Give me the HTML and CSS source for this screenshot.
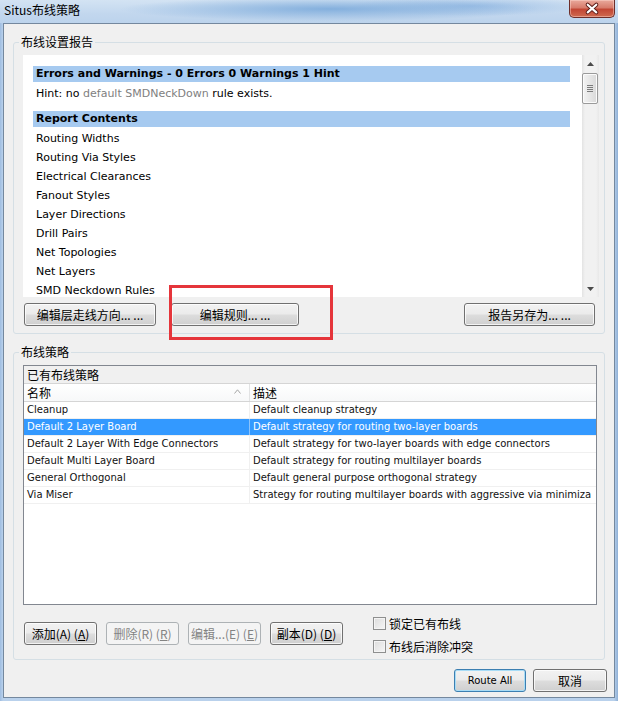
FILE: index.html
```html
<!DOCTYPE html>
<html lang="zh-CN">
<head>
<meta charset="utf-8">
<title>Situs布线策略</title>
<link rel="stylesheet" href="styles.css">
</head>
<body>
<div class="window">
  <header class="titlebar">
    <span class="title">Situs布线策略</span>
    <span class="close-btn">
      <svg width="46" height="18" viewBox="0 0 46 18">
        <path d="M18.5 4.5 L27.5 12.5 M27.5 4.5 L18.5 12.5" stroke="#5a1c18" stroke-width="4.2" stroke-linecap="round"/>
        <path d="M18.5 4.5 L27.5 12.5 M27.5 4.5 L18.5 12.5" stroke="#ffffff" stroke-width="2.2" stroke-linecap="round"/>
      </svg>
    </span>
  </header>
  <main class="client">
    <fieldset class="group group-report">
      <legend>布线设置报告</legend>
      <div class="report">
        <div class="report-body">
          <div class="rhead">Errors and Warnings - 0 Errors 0 Warnings 1 Hint</div>
          <div class="rline">Hint: no <span class="dim">default SMDNeckDown</span> rule exists.</div>
          <div class="rhead rhead-gap">Report Contents</div>
          <div class="rline">Routing Widths</div>
          <div class="rline">Routing Via Styles</div>
          <div class="rline">Electrical Clearances</div>
          <div class="rline">Fanout Styles</div>
          <div class="rline">Layer Directions</div>
          <div class="rline">Drill Pairs</div>
          <div class="rline">Net Topologies</div>
          <div class="rline">Net Layers</div>
          <div class="rline">SMD Neckdown Rules</div>
        </div>
        <div class="vscroll">
          <div class="sb-arrow"><svg width="7" height="4" viewBox="0 0 7 4"><path d="M0 4 L3.5 0 L7 4 Z" fill="#4a4a4a"/></svg></div>
          <div class="sb-track">
            <div class="sb-thumb"><span></span><span></span><span></span><span></span></div>
          </div>
          <div class="sb-arrow"><svg width="7" height="4" viewBox="0 0 7 4"><path d="M0 0 L7 0 L3.5 4 Z" fill="#4a4a4a"/></svg></div>
        </div>
      </div>
      <div class="btn-row">
        <button class="btn btn-layer">编辑层走线方向... ...</button>
        <button class="btn btn-rules">编辑规则... ...</button>
        <button class="btn btn-save">报告另存为... ...</button>
      </div>
    </fieldset>

    <fieldset class="group group-strategy">
      <legend>布线策略</legend>
      <div class="listview">
        <div class="lv-group">已有布线策略</div>
        <div class="lv-header">
          <div class="lv-col1">名称<svg class="sort" width="7" height="5" viewBox="0 0 7 5"><path d="M0.5 4.5 L3.5 0.8 L6.5 4.5" fill="none" stroke="#a6a6a6" stroke-width="1"/></svg></div>
          <div class="lv-col2">描述</div>
        </div>
        <div class="lv-row"><div class="lv-col1">Cleanup</div><div class="lv-col2">Default cleanup strategy</div></div>
        <div class="lv-row selected"><div class="lv-col1">Default 2 Layer Board</div><div class="lv-col2">Default strategy for routing two-layer boards</div></div>
        <div class="lv-row"><div class="lv-col1">Default 2 Layer With Edge Connectors</div><div class="lv-col2">Default strategy for two-layer boards with edge connectors</div></div>
        <div class="lv-row"><div class="lv-col1">Default Multi Layer Board</div><div class="lv-col2">Default strategy for routing multilayer boards</div></div>
        <div class="lv-row"><div class="lv-col1">General Orthogonal</div><div class="lv-col2">Default general purpose orthogonal strategy</div></div>
        <div class="lv-row"><div class="lv-col1">Via Miser</div><div class="lv-col2">Strategy for routing multilayer boards with aggressive via minimiza</div></div>
      </div>
      <div class="strat-actions">
        <button class="btn btn-sm">添加(A) (<u>A</u>)</button>
        <button class="btn btn-sm" disabled>删除(R) (<u>R</u>)</button>
        <button class="btn btn-sm" disabled>编辑...(E) (<u>E</u>)</button>
        <button class="btn btn-sm">副本(D) (<u>D</u>)</button>
        <div class="checks">
          <label class="check"><span class="box"></span>锁定已有布线</label>
          <label class="check"><span class="box"></span>布线后消除冲突</label>
        </div>
      </div>
    </fieldset>

    <div class="dlg-actions">
      <button class="btn btn-default">Route All</button>
      <button class="btn btn-cancel">取消</button>
    </div>
  </main>
  <div class="annotation"></div>
</div>
</body>
</html>
```

FILE: styles.css
```css
* { box-sizing: border-box; }

html, body {
  margin: 0;
  padding: 0;
}

body {
  width: 618px;
  height: 701px;
  overflow: hidden;
  background: #a9c4e3;
  font-family: "DejaVu Sans", sans-serif;
  color: #000;
}

.window {
  position: relative;
  width: 618px;
  height: 701px;
  display: flex;
  flex-direction: column;
  background: linear-gradient(90deg, #9fbde0 0, #b9d1ec 3px, #b9d1ec 614px, #8fb0d6 618px);
}

/* ---------- title bar ---------- */
.titlebar {
  flex: none;
  height: 23px;
  display: flex;
  align-items: flex-start;
  background:
    radial-gradient(ellipse 210px 12px at 330px 9px, rgba(120, 168, 218, 0.85), rgba(120, 168, 218, 0) 100%),
    radial-gradient(ellipse 120px 10px at 470px 6px, rgba(140, 180, 225, 0.7), rgba(140, 180, 225, 0) 100%),
    linear-gradient(180deg, #d3e3f3 0%, #c2d7ee 60%, #bcd3ec 100%);
}

.title {
  padding-left: 4px;
  font: 12px/20px "Noto Sans CJK SC", sans-serif;
  color: #000;
}

.close-btn {
  margin-left: auto;
  margin-right: 3px;
  width: 46px;
  height: 18px;
  display: flex;
  border: 1px solid #6d2e2a;
  border-top: none;
  border-radius: 0 0 5px 5px;
  background: linear-gradient(180deg, #e9a99c 0%, #d77c6c 45%, #c24634 55%, #cf6a50 100%);
  box-shadow: inset 0 0 0 1px rgba(255, 220, 210, 0.45);
}

/* ---------- client ---------- */
.client {
  flex: 1;
  min-height: 0;
  margin: 0 3px 3px 3px;
  border: 1px solid #74889e;
  background: #f0f0f0;
  padding: 0 9px;
  display: flex;
  flex-direction: column;
}

.group {
  margin: 0;
  min-width: 0;
  padding: 5px 5px 7px 9px;
  border: 1px solid #d5dfe5;
  border-radius: 3px;
}

.group legend {
  padding: 0 2px;
  margin-left: -4px;
  font: 12px/16px "Noto Sans CJK SC", sans-serif;
  color: #000;
}

.group-report { margin-top: 10px; }
.group-strategy { margin-top: 10px; padding-bottom: 3px; }

/* ---------- report ---------- */
.report {
  height: 242px;
  display: flex;
  background: #fff;
}

.report-body {
  flex: 1;
  min-width: 0;
  overflow: hidden;
  padding: 11px 12px 0 10px;
  font-size: 11px;
}

.rhead {
  height: 16px;
  line-height: 16px;
  padding-left: 3px;
  background: #a6caf0;
  font-weight: bold;
  white-space: nowrap;
}

.rhead-gap { margin-top: 8px; }

.rline {
  margin-top: 2px;
  line-height: 19px;
  padding-left: 3px;
  white-space: nowrap;
}

.rline + .rline { margin-top: 0; }

.dim { color: #808080; }

.vscroll {
  flex: none;
  width: 17px;
  display: flex;
  flex-direction: column;
  background: linear-gradient(90deg, #e3e3e3 0, #f1f1f1 3px, #f1f1f1 14px, #e8e8e8 17px);
}

.sb-arrow {
  height: 17px;
  display: flex;
  align-items: center;
  justify-content: center;
}

.sb-track { flex: 1; }

.sb-thumb {
  margin: 1px 1px 0 0;
  height: 31px;
  border: 1px solid #9a9a9a;
  border-radius: 2px;
  background: linear-gradient(90deg, #f3f3f3 0%, #e6e6e6 50%, #d9d9d9 100%);
  box-shadow: inset 0 0 0 1px #fbfbfb;
  display: flex;
  flex-direction: column;
  align-items: center;
  justify-content: center;
  gap: 1px;
}

.sb-thumb span {
  width: 6px;
  height: 1px;
  background: #7b7b7b;
}

/* ---------- buttons ---------- */
.btn {
  height: 23px;
  padding: 0;
  border: 1px solid #707070;
  border-radius: 3px;
  background: linear-gradient(180deg, #f2f2f2 0%, #ebebeb 48%, #dddddd 52%, #cfcfcf 100%);
  box-shadow: inset 0 0 0 1px rgba(255, 255, 255, 0.75);
  font: 12px/21px "Noto Sans CJK SC", sans-serif;
  color: #000;
  text-align: center;
  white-space: nowrap;
}

.btn:disabled {
  border-color: #adb2b5;
  background: #f4f4f4;
  box-shadow: none;
  color: #838383;
}

.btn u { text-decoration-thickness: 1px; text-underline-offset: 1px; }

.btn-row {
  margin-top: 6px;
  padding: 0 4px 0 1px;
  display: flex;
}

.btn-layer { width: 132px; }
.btn-rules { width: 128px; margin-left: 15px; }
.btn-save { width: 131px; margin-left: auto; }

/* ---------- list view ---------- */
.listview {
  height: 240px;
  margin-right: 2px;
  border: 1px solid #828790;
  background: #fff;
  display: flex;
  flex-direction: column;
  overflow: hidden;
}

.lv-group {
  height: 18px;
  padding-left: 3px;
  border-bottom: 1px solid #d5d5d5;
  background: #f0f0f0;
  font: 12px/17px "Noto Sans CJK SC", sans-serif;
}

.lv-header {
  height: 18px;
  display: flex;
  border-bottom: 1px solid #d5d5d5;
  background: linear-gradient(180deg, #ffffff 0%, #f7f8f9 100%);
  font: 12px/17px "Noto Sans CJK SC", sans-serif;
}

.lv-header .lv-col1 {
  display: flex;
  align-items: center;
  border-right: 1px solid #e2e3e4;
}

.sort { margin-left: auto; margin-right: 8px; margin-top: -3px; }

.lv-col1 {
  flex: none;
  width: 226px;
  padding-left: 3px;
  overflow: hidden;
  white-space: nowrap;
  border-right: 1px solid #f0f0f0;
}

.lv-col2 {
  flex: 1;
  min-width: 0;
  padding-left: 3px;
  overflow: hidden;
  white-space: nowrap;
}

.lv-row {
  height: 17px;
  display: flex;
  border-bottom: 1px solid #f0f0f0;
  font-size: 10px;
  line-height: 16px;
  color: #111;
}

.lv-row.selected {
  background: #3399ff;
  color: #fff;
}

.lv-row.selected .lv-col1 { border-right-color: #8cc3fb; }

/* ---------- strategy actions ---------- */
.strat-actions {
  margin-top: 7px;
  padding-left: 1px;
  display: flex;
  align-items: flex-start;
  gap: 9px;
}

.btn-sm { width: 73px; margin-top: 10px; }

.checks {
  margin-left: 21px;
  padding: 5px 0 3px;
  display: flex;
  flex-direction: column;
  gap: 10px;
}

.check {
  display: flex;
  align-items: center;
  gap: 3px;
  height: 13px;
  font: 12px/13px "Noto Sans CJK SC", sans-serif;
}

.box {
  width: 13px;
  height: 13px;
  border: 1px solid #8e8f8f;
  background: linear-gradient(135deg, #dcdcdc 0%, #f6f6f6 100%);
  box-shadow: inset 0 0 0 1px #f4f4f4;
}

/* ---------- dialog actions ---------- */
.dlg-actions {
  margin-top: 9px;
  margin-right: -2px;
  display: flex;
  justify-content: flex-end;
  gap: 7px;
}

.btn-default {
  width: 72px;
  border-color: #3c7fb1;
  box-shadow: inset 0 0 0 1px #a8dcf6;
  font: 10px/21px "DejaVu Sans", sans-serif;
}

.btn-cancel { width: 74px; }

/* ---------- annotation overlay ---------- */
.annotation {
  position: absolute;
  left: 169px;
  top: 285px;
  width: 164px;
  height: 55px;
  border: 3px solid #e5353b;
  pointer-events: none;
}
```
